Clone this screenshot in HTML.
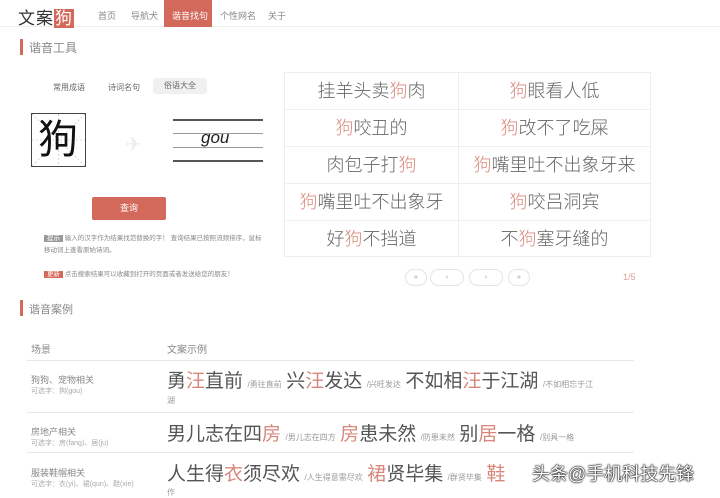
<!DOCTYPE html><html><head><meta charset="utf-8"><style>
*{margin:0;padding:0;box-sizing:border-box}
body{width:720px;height:497px;overflow:hidden;background:#fff;font-family:"Liberation Sans","Noto Sans CJK SC",sans-serif;color:#555;position:relative}
.a{position:absolute}
.r{color:#d9877b}
.nav span{position:absolute;top:9px;font-size:9px;color:#888}
.grid{left:284px;top:72px;width:367px;height:185px;border:1px solid #eee}
.grid div{position:absolute;height:37px;line-height:36px;text-align:center;font-size:18px;color:#666;border-bottom:1px solid #eee;font-weight:300}
.L{left:0;width:173px}.R{left:173px;width:192px;border-left:1px solid #eee}
.pg{top:269px;height:17px;border:1px solid #e4e4e4;border-radius:9px;font-size:7px;color:#999;text-align:center;line-height:15px}
.row{left:27px;width:607px;border-top:1px solid #e8e8e8}
.lab{font-size:9px;color:#888}
.sub{font-size:7px;color:#aaa}
.big{font-size:19px;color:#555}
.sm{font-size:8px;color:#999}
</style></head><body>
<div class="a" style="top:0;left:0;width:720px;height:27px;border-bottom:1px solid #eee"></div>
<div class="a" style="left:18px;top:4px;font-size:17px;color:#333;letter-spacing:1px">文案<span style="background:#d2695a;color:#fff;padding:0 1px">狗</span></div>
<div class="nav">
<span style="left:98px">首页</span><span style="left:131px">导航犬</span>
<div class="a" style="left:164px;top:0;width:48px;height:27px;background:#d2695a"></div>
<span style="left:172px;color:#fff">谐音找句</span><span style="left:220px">个性网名</span><span style="left:268px">关于</span></div>
<div class="a" style="left:20px;top:39px;width:3px;height:16px;background:#d2695a"></div>
<div class="a" style="left:29px;top:39px;font-size:12px;color:#888">谐音工具</div>
<div class="a" style="left:53px;top:82px;font-size:8px;color:#666">常用成语</div>
<div class="a" style="left:108px;top:82px;font-size:8px;color:#666">诗词名句</div>
<div class="a" style="left:153px;top:78px;width:54px;height:16px;background:#f0f0f0;border-radius:3px;font-size:8px;color:#666;text-align:center;line-height:16px">俗语大全</div>
<div class="a" style="left:31px;top:113px;width:55px;height:54px;border:1px solid #444">
<svg width="53" height="52" style="position:absolute"><g stroke="#bbb" stroke-dasharray="2,2" stroke-width=".6"><line x1="0" y1="0" x2="53" y2="52"/><line x1="53" y1="0" x2="0" y2="52"/><line x1="26.5" y1="0" x2="26.5" y2="52"/><line x1="0" y1="26" x2="53" y2="26"/></g></svg>
<div class="a" style="left:6px;top:2px;font-size:40px;color:#111;line-height:48px">狗</div></div>
<div class="a" style="left:125px;top:132px;font-size:20px;color:#eee">✈</div>
<div class="a" style="left:173px;top:119px;width:90px;height:2px;background:#555"></div>
<div class="a" style="left:173px;top:133px;width:90px;height:1px;background:#999"></div>
<div class="a" style="left:173px;top:147px;width:90px;height:1px;background:#999"></div>
<div class="a" style="left:173px;top:160px;width:90px;height:2px;background:#555"></div>
<div class="a" style="left:201px;top:128px;font-size:17px;font-style:italic;color:#222">gou</div>
<div class="a" style="left:92px;top:197px;width:74px;height:23px;background:#d2695a;border-radius:2px;color:#fff;font-size:9px;text-align:center;line-height:23px">查询</div>
<div class="a" style="left:44px;top:233px;width:222px;font-size:6.5px;color:#888;line-height:12px"><span style="background:#999;color:#fff;padding:0 3px">提示</span> 输入的汉字作为结果找范替换的字！ 查询结果已按照流频排序，鼠标移动词上查看原始诗词。</div>
<div class="a" style="left:44px;top:268px;font-size:6.5px;color:#888"><span style="background:#d2695a;color:#fff;padding:0 3px">更新</span> 点击搜索结果可以收藏到打开的页面或者发送给您的朋友！</div>
<div class="a grid">
<div class="L" style="top:0">挂羊头卖<span class="r">狗</span>肉</div><div class="R" style="top:0"><span class="r">狗</span>眼看人低</div>
<div class="L" style="top:37px"><span class="r">狗</span>咬丑的</div><div class="R" style="top:37px"><span class="r">狗</span>改不了吃屎</div>
<div class="L" style="top:74px">肉包子打<span class="r">狗</span></div><div class="R" style="top:74px"><span class="r">狗</span>嘴里吐不出象牙来</div>
<div class="L" style="top:111px"><span class="r">狗</span>嘴里吐不出象牙</div><div class="R" style="top:111px"><span class="r">狗</span>咬吕洞宾</div>
<div class="L" style="top:148px;border-bottom:0">好<span class="r">狗</span>不挡道</div><div class="R" style="top:148px;border-bottom:0">不<span class="r">狗</span>塞牙缝的</div>
</div>
<div class="a pg" style="left:405px;width:22px">«</div><div class="a pg" style="left:430px;width:34px">‹</div><div class="a pg" style="left:469px;width:34px">›</div><div class="a pg" style="left:508px;width:22px">»</div>
<div class="a" style="left:623px;top:272px;font-size:9px;color:#d9a39b">1/5</div>
<div class="a" style="left:20px;top:300px;width:3px;height:16px;background:#d2695a"></div>
<div class="a" style="left:29px;top:301px;font-size:11px;color:#888">谐音案例</div>
<div class="a lab" style="left:31px;top:341px;font-size:10px">场景</div>
<div class="a lab" style="left:167px;top:341px;font-size:10px">文案示例</div>
<div class="a row" style="top:360px"></div>
<div class="a lab" style="left:31px;top:373px">狗狗、宠物相关</div><div class="a sub" style="left:31px;top:386px">可选字：狗(gou)</div>
<div class="a" style="left:167px;top:366px;white-space:nowrap"><span class="big">勇<span class="r">汪</span>直前</span> <span class="sm">/勇往直前</span> <span class="big">兴<span class="r">汪</span>发达</span> <span class="sm">/兴旺发达</span> <span class="big">不如相<span class="r">汪</span>于江湖</span> <span class="sm">/不如相忘于江</span></div>
<div class="a sm" style="left:167px;top:395px">湖</div>
<div class="a row" style="top:412px"></div>
<div class="a lab" style="left:31px;top:425px">房地产相关</div><div class="a sub" style="left:31px;top:438px">可选字：房(fang)、居(ju)</div>
<div class="a" style="left:167px;top:419px;white-space:nowrap"><span class="big">男儿志在四<span class="r">房</span></span> <span class="sm">/男儿志在四方</span> <span class="big"><span class="r">房</span>患未然</span> <span class="sm">/防患未然</span> <span class="big">别<span class="r">居</span>一格</span> <span class="sm">/别具一格</span></div>
<div class="a row" style="top:452px"></div>
<div class="a lab" style="left:31px;top:466px">服装鞋帽相关</div><div class="a sub" style="left:31px;top:479px">可选字：衣(yi)、裙(qun)、鞋(xie)</div>
<div class="a" style="left:167px;top:459px;white-space:nowrap"><span class="big">人生得<span class="r">衣</span>须尽欢</span> <span class="sm">/人生得意需尽欢</span> <span class="big"><span class="r">裙</span>贤毕集</span> <span class="sm">/群贤毕集</span> <span class="big"><span class="r">鞋</span></span></div>
<div class="a sm" style="left:167px;top:487px">作</div>
<div class="a" style="left:532px;top:460px;font-size:18px;color:#fff;text-shadow:0 0 2px #000,0 0 1px #000,0 0 1px #000;white-space:nowrap">头条@手机科技先锋</div>
</body></html>
